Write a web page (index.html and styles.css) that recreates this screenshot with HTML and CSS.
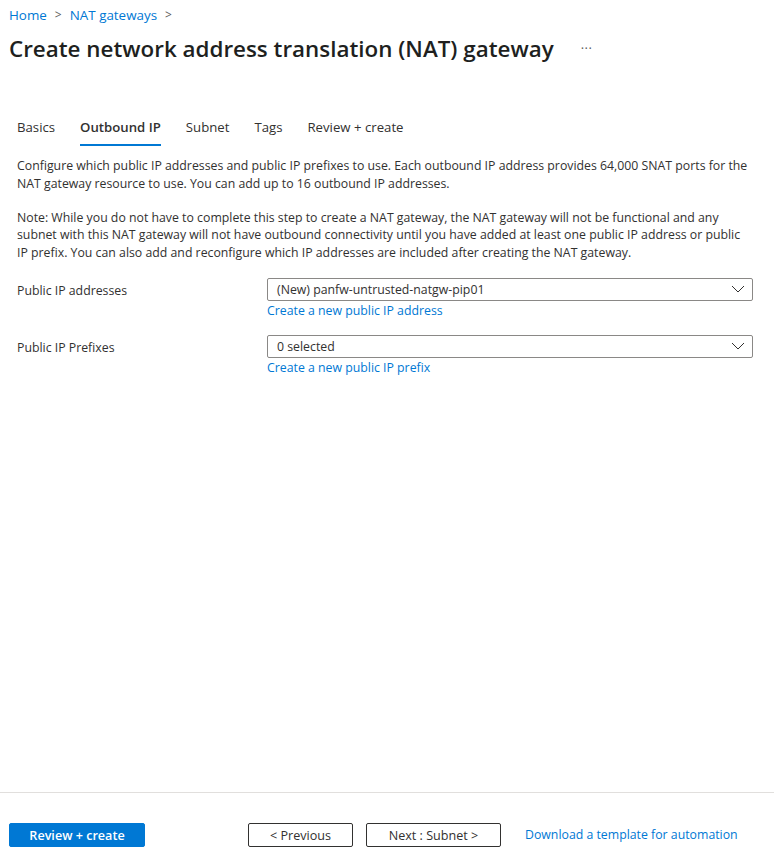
FILE: index.html
```html
<!DOCTYPE html>
<html>
<head>
<meta charset="utf-8">
<link rel="stylesheet" href="styles.css">
</head>
<body>
<div class="page">
  <main class="main">
    <nav class="breadcrumb">
      <a class="crumb">Home</a>
      <span class="chev">&gt;</span>
      <a class="crumb">NAT gateways</a>
      <span class="chev">&gt;</span>
    </nav>
    <div class="titlerow">
      <h1 class="title">Create network address translation (NAT) gateway</h1>
      <span class="more">···</span>
    </div>
    <div class="tabs">
      <span class="tab">Basics</span>
      <span class="tab active">Outbound IP</span>
      <span class="tab">Subnet</span>
      <span class="tab">Tags</span>
      <span class="tab">Review + create</span>
    </div>
    <div class="content">
      <p class="desc">Configure which public IP addresses and public IP prefixes to use. Each outbound IP address provides 64,000 SNAT ports for the NAT gateway resource to use. You can add up to 16 outbound IP addresses.</p>
      <p class="desc">Note: While you do not have to complete this step to create a NAT gateway, the NAT gateway will not be functional and any subnet with this NAT gateway will not have outbound connectivity until you have added at least one public IP address or public IP prefix. You can also add and reconfigure which IP addresses are included after creating the NAT gateway.</p>
      <div class="form">
        <div class="row">
          <div class="label">Public IP addresses</div>
          <div class="control">
            <div class="select"><span>(New) panfw-untrusted-natgw-pip01</span>
              <svg class="caret" width="14" height="8" viewBox="0 0 14 8"><path d="M1 1 L7 7 L13 1" fill="none" stroke="#323130" stroke-width="1"/></svg>
            </div>
            <a class="link">Create a new public IP address</a>
          </div>
        </div>
        <div class="row">
          <div class="label">Public IP Prefixes</div>
          <div class="control">
            <div class="select"><span>0 selected</span>
              <svg class="caret" width="14" height="8" viewBox="0 0 14 8"><path d="M1 1 L7 7 L13 1" fill="none" stroke="#323130" stroke-width="1"/></svg>
            </div>
            <a class="link">Create a new public IP prefix</a>
          </div>
        </div>
      </div>
    </div>
  </main>
  <footer class="footer">
    <button class="btn primary">Review + create</button>
    <button class="btn secondary prev">&lt; Previous</button>
    <button class="btn secondary next">Next : Subnet &gt;</button>
    <a class="link download">Download a template for automation</a>
  </footer>
</div>
</body>
</html>
```
FILE: styles.css
```css
* { box-sizing: border-box; }
html, body { margin: 0; padding: 0; background: #fff; }
body {
  font-family: "Segoe UI", "Open Sans", "Noto Sans", sans-serif;
  font-size: 12.3px;
  color: #323130;
}
.page {
  height: 864px;
  display: flex;
  flex-direction: column;
}
.main { flex: 1; }
.breadcrumb {
  display: flex;
  align-items: center;
  gap: 8px;
  padding: 5px 0 0 9px;
  height: 24px;
  font-size: 13.4px;
}
.crumb { color: #0078d4; }
.chev { color: #605e5c; font-size: 12px; }
.titlerow {
  display: flex;
  align-items: center;
  padding: 6px 0 0 9px;
  height: 42px;
}
.title {
  margin: 0;
  font-size: 22.4px;
  font-weight: 600;
  color: #201f1e;
}
.more {
  margin-left: 27px;
  color: #605e5c;
  font-size: 13px;
  letter-spacing: 0.5px;
}
.tabs {
  display: flex;
  gap: 25px;
  padding: 0 0 0 17px;
  margin-top: 50px;
  height: 41px;
}
.tab {
  font-size: 13.2px;
  height: 36px;
  line-height: 22px;
}
.tab.active {
  font-weight: 600;
  border-bottom: 2px solid #0078d4;
  height: 30px;
}
.content { padding: 0 17px; }
.desc {
  margin: 0 5px 16.5px 0;
  font-size: 12.3px;
  line-height: 17.5px;
}
.form { margin-top: 5px; }
.row {
  display: flex;
  margin-bottom: 14px;
}
.label {
  width: 250px;
  flex: none;
  padding-top: 4px;
}
.control {
  width: 486px;
  flex: none;
  display: flex;
  flex-direction: column;
}
.select {
  height: 23px;
  border: 1px solid #8a8886;
  border-radius: 2px;
  display: flex;
  align-items: center;
  justify-content: space-between;
  padding: 0 7px 0 9px;
}
.link {
  color: #0078d4;
  line-height: 20px;
}
.footer {
  border-top: 1px solid #e1dfdd;
  height: 72px;
  display: flex;
  align-items: flex-start;
  padding: 30px 0 0 9px;
}
.btn {
  font-family: inherit;
  font-size: 12.6px;
  height: 24px;
  border-radius: 2px;
  padding: 0;
}
.primary {
  width: 136px;
  background: #0078d4;
  border: 1px solid #0078d4;
  color: #fff;
  font-weight: 600;
}
.secondary {
  background: #fff;
  border: 1px solid #323130;
  color: #323130;
}
.prev { width: 105px; margin-left: 103px; }
.next { width: 135px; margin-left: 13px; }
.download { margin-left: 24px; line-height: 24px; }
```
